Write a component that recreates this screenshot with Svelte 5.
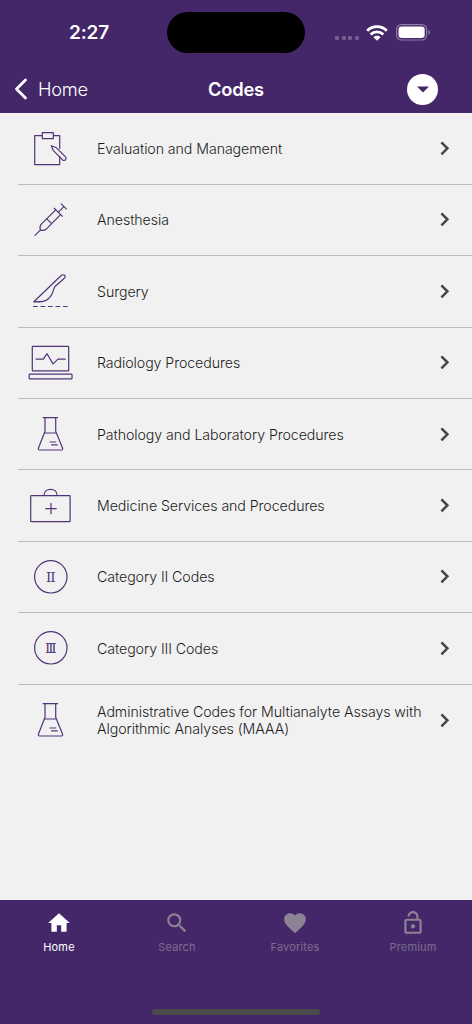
<script>
    let activeTab = $state('Home');

    const codes = [
        { label: 'Evaluation and Management', icon: 'clipboard' },
        { label: 'Anesthesia', icon: 'syringe' },
        { label: 'Surgery', icon: 'scalpel' },
        { label: 'Radiology Procedures', icon: 'laptop' },
        { label: 'Pathology and Laboratory Procedures', icon: 'flask' },
        { label: 'Medicine Services and Procedures', icon: 'case' },
        { label: 'Category II Codes', icon: 'two' },
        { label: 'Category III Codes', icon: 'three' },
        { label: 'Administrative Codes for Multianalyte Assays with Algorithmic Analyses (MAAA)', icon: 'flask' }
    ];

    const tabs = ['Home', 'Search', 'Favorites', 'Premium'];

    const tabIcons = {
        Home: 'M10 20v-6h4v6h5v-8h3L12 3 2 12h3v8z',
        Search: 'M15.5 14h-.79l-.28-.27A6.471 6.471 0 0 0 16 9.5 6.5 6.5 0 1 0 9.5 16c1.61 0 3.09-.59 4.23-1.57l.27.28v.79l5 4.99L20.49 19l-4.99-5zm-6 0C7.01 14 5 11.99 5 9.5S7.01 5 9.5 5 14 7.01 14 9.5 11.99 14 9.5 14z',
        Favorites: 'M12 21.35l-1.45-1.32C5.4 15.36 2 12.28 2 8.5 2 5.42 4.42 3 7.5 3c1.74 0 3.41.81 4.5 2.09C13.09 3.81 14.76 3 16.5 3 19.58 3 22 5.42 22 8.5c0 3.78-3.4 6.86-8.55 11.54L12 21.35z',
        Premium: 'M12 17c1.1 0 2-.9 2-2s-.9-2-2-2-2 .9-2 2 .9 2 2 2zm6-9h-1V6c0-2.76-2.24-5-5-5S7 3.24 7 6h1.9c0-1.71 1.39-3.1 3.1-3.1 1.71 0 3.1 1.39 3.1 3.1v2H6c-1.1 0-2 .9-2 2v10c0 1.1.9 2 2 2h12c1.1 0 2-.9 2-2V10c0-1.1-.9-2-2-2zm0 12H6V10h12v10z'
    };
</script>

<div class="app">
    <header>
        <div class="status">
            <div class="time">2:27</div>
            <div class="island"></div>
            <div class="signals">
                <div class="dots"><i></i><i></i><i></i><i></i></div>
                <svg class="wifi" width="22" height="16" viewBox="0 0 22 16">
                    <g fill="none" stroke="#fff" stroke-width="2.9">
                        <path d="M1.2 5.7C6.7.3 15.3.3 20.8 5.7" />
                        <path d="M4.7 9.5c3.5-3.5 9.1-3.5 12.6 0" />
                    </g>
                    <path fill="#fff" d="M7.5 12.2c2-1.9 5-1.9 7 0L11 15.8z" />
                </svg>
                <svg class="battery" width="35" height="17" viewBox="0 0 35 17">
                    <rect x=".6" y=".6" width="30" height="15.4" rx="4.8" fill="none" stroke="#8f7ca6" stroke-width="1.2" />
                    <rect x="2.5" y="2.6" width="26.2" height="11.4" rx="3.2" fill="#fff" />
                    <path d="M32.3 5.8c2.2.8 2.2 4.2 0 5z" fill="#8f7ca6" />
                </svg>
            </div>
        </div>
        <nav>
            <button class="back">
                <svg width="14" height="22" viewBox="0 0 14 22">
                    <path d="M11.5 2 2.5 11l9 9" fill="none" stroke="#fff" stroke-width="2.8" stroke-linecap="round" stroke-linejoin="round" />
                </svg>
                <span>Home</span>
            </button>
            <h1>Codes</h1>
            <button class="more" aria-label="More">
                <svg width="12" height="7" viewBox="0 0 12 7"><path d="M0 .5h12l-6 6z" fill="#442768" /></svg>
            </button>
        </nav>
    </header>

    <main>
        {#each codes as code}
            <div class="row">
                <svg class="icon" width="48" height="48" viewBox="0 0 48 48">
                    {#if code.icon === 'clipboard'}
                        <path d="M16.3 10.6H8.7v29h25V35M27.3 10.6h6.4V24M33.7 31v4" />
                        <rect x="16.3" y="7.7" width="11" height="6" />
                        <path d="M25.3 20.8l5.2 2 9 9c1.9 2-1 5-3 3L27.4 25.7z" />
                    {:else if code.icon === 'syringe'}
                        <path d="M8.7 39.6l5.6-5.5M29.7 13.8L14.8 28.7c-1.2 1.8-.8 3.6-.5 5.4 1.8.4 3.6.6 5.4-.5l14.9-14.9" />
                        <path d="M28 12l8.7 8.7M32.3 16.3l5.5-5.7M35 7.7l5.7 5.7M20.8 22.9l4.8 4.8" />
                    {:else if code.icon === 'scalpel'}
                        <path d="M7.8 34.8L35.2 8.5c1.5-1.2 3.9-.9 4.1.8.1 1-1 2-1.8 2.7l-8.8 7.7c-1.4 3-1.6 6.4-4 9.5-2.2 3-4.2 4.6-7.4 5.1-3 .5-6.2.5-9.5.5z" />
                        <path d="M7 39.5h35" stroke-dasharray="4.7 2.8" />
                    {:else if code.icon === 'laptop'}
                        <rect x="6.3" y="7.4" width="36.4" height="24.4" rx=".6" />
                        <rect x="3.2" y="35.2" width="42.8" height="4.6" rx=".6" />
                        <path d="M9.6 20.1h7.7l3.7-5.4 6 10.2 5-4.8h7.7" />
                    {:else if code.icon === 'flask'}
                        <path d="M16.7 7.7H32M19 7.7v13.5l-6.6 17c-.3 1 .2 1.8 1.2 1.8h21.8c1 0 1.5-.8 1.2-1.8l-6.9-17V7.7M18.4 23h11.8M23.6 32h6.6M25.2 34.8h6.5" />
                    {:else if code.icon === 'case'}
                        <rect x="4.7" y="13.6" width="39.4" height="26.1" rx=".6" />
                        <path d="M18 13.3c.2-8 13-8 13.1 0M25 20.9v11.4M19.3 26.6h11.4" />
                    {:else}
                        <circle cx="24.8" cy="23.8" r="16.2" />
                        {#if code.icon === 'two'}
                            <text class="two" x="20" y="28.7">II</text>
                        {:else}
                            <text class="three" x="19" y="28.7">III</text>
                        {/if}
                    {/if}
                </svg>
                <div class="label">{code.label}</div>
                <svg class="chevron" width="10" height="15" viewBox="0 0 10 15">
                    <path d="M1.4 1.3 7.4 7.3l-6 6" />
                </svg>
            </div>
        {/each}
    </main>

    <footer>
        <div class="tabs">
            {#each tabs as tab}
                <button class="tab" class:active={activeTab === tab} onclick={() => (activeTab = tab)}>
                    <svg width="26" height="26" viewBox="0 0 24 24"><path d={tabIcons[tab]} /></svg>
                    <span>{tab}</span>
                </button>
            {/each}
        </div>
        <div class="indicator"></div>
    </footer>
</div>

<style>
    :global(body) {
        margin: 0;
    }

    .app {
        display: flex;
        flex-direction: column;
        width: 472px;
        height: 1024px;
        overflow: hidden;
        background: #f1f1f1;
        font-family: Inter, "Liberation Sans", sans-serif;
    }

    button {
        border: none;
        padding: 0;
        background: none;
        color: inherit;
        font: inherit;
        cursor: pointer;
    }

    header {
        height: 113.4px;
        background: #442768;
        color: #fff;
        box-sizing: border-box;
    }

    .status {
        display: grid;
        grid-template-columns: 167px 138px 1fr;
        height: 65px;
        align-items: center;
    }

    .time {
        padding-left: 69px;
        font-size: 19px;
        font-weight: 600;
        letter-spacing: -0.2px;
    }

    .island {
        height: 41px;
        border-radius: 21px;
        background: #000;
    }

    .signals {
        display: flex;
        align-items: center;
        padding-left: 30px;
    }

    .dots {
        display: flex;
        gap: 2.6px;
        margin: 10px 7px 0 0;
    }

    .dots i {
        width: 4px;
        height: 4px;
        border-radius: 1.3px;
        background: #755d90;
    }

    .battery {
        margin-left: 8px;
    }

    nav {
        display: grid;
        grid-template-columns: 150px 144px 1fr;
        align-items: center;
        height: 48px;
        padding: 0 34px 0 14px;
    }

    .back {
        display: flex;
        align-items: center;
        gap: 10px;
        font-size: 18.3px;
        letter-spacing: -0.3px;
    }

    .back span {
        font-weight: 350;
    }

    h1 {
        margin: 0;
        text-align: center;
        font-size: 18.3px;
        font-weight: 600;
        letter-spacing: -0.2px;
    }

    .more {
        display: flex;
        align-items: center;
        justify-content: center;
        justify-self: end;
        width: 31px;
        height: 31px;
        border-radius: 50%;
        background: #fff;
    }

    main {
        flex: 1;
    }

    .row {
        display: flex;
        align-items: center;
        box-sizing: border-box;
        height: 71.4px;
        margin-left: 18px;
        padding: 0 22px 0 8px;
        border-bottom: 1px solid #bdbdbd;
    }

    .row:last-child {
        border-bottom: none;
    }

    .icon {
        flex: none;
        fill: none;
        stroke: #52347a;
        stroke-width: 1.2;
        stroke-linejoin: round;
    }

    .icon text {
        font-family: "DejaVu Serif", serif;
        font-size: 13.5px;
        fill: #52347a;
        stroke: none;
    }

    .two {
        letter-spacing: -1px;
    }

    .three {
        letter-spacing: -2.2px;
    }

    .label {
        flex: 1;
        margin-left: 23px;
        font-size: 14.2px;
        font-weight: 350;
        letter-spacing: -0.08px;
        line-height: 17px;
        color: #1c1c1c;
    }

    .chevron {
        flex: none;
        fill: none;
        stroke: #454545;
        stroke-width: 2.5;
    }

    footer {
        display: flex;
        flex-direction: column;
        justify-content: space-between;
        align-items: center;
        box-sizing: border-box;
        height: 124px;
        padding-bottom: 9px;
        background: #442768;
    }

    .tabs {
        display: grid;
        grid-template-columns: repeat(4, 118px);
        padding-top: 10px;
    }

    .tab {
        display: flex;
        flex-direction: column;
        align-items: center;
        gap: 3.5px;
        color: #7b6b91;
        font-size: 11px;
        line-height: 15px;
        letter-spacing: 0.15px;
    }

    .tab svg {
        fill: #8c8394;
    }

    .tab.active {
        color: #fff;
    }

    .tab.active svg {
        fill: #fff;
    }

    .indicator {
        width: 168px;
        height: 6px;
        border-radius: 3px;
        background: #4b4a4b;
    }
</style>
